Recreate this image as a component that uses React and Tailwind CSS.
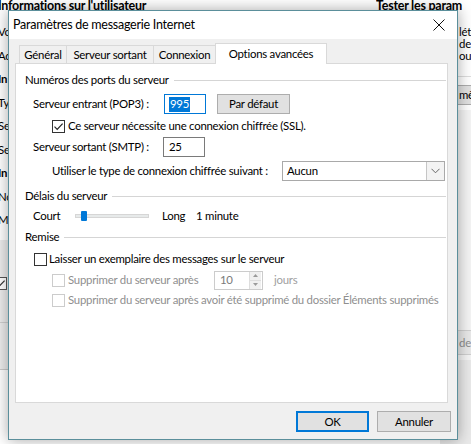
import React from "react";

function Check({ checked, disabled }) {
  return (
    <span
      className={
        disabled
          ? "w-[13px] h-[13px] border border-[#cccccc] bg-white flex items-center justify-center shrink-0"
          : "w-[13px] h-[13px] border border-[#333333] bg-white flex items-center justify-center shrink-0"
      }
    >
      {checked && (
        <svg width="11" height="11" viewBox="0 0 11 11">
          <path d="M1.5 5.6 L4.2 8.3 L9.6 2.6" fill="none" stroke="#222" strokeWidth="1.2" />
        </svg>
      )}
    </span>
  );
}

function Group({ label }) {
  return (
    <div className="flex items-center h-[16px] pl-[9px] pr-[1px] shrink-0">
      <span className="whitespace-nowrap">{label}</span>
      <div className="flex-1 h-px bg-[#d5d5d5] ml-[5px]" />
    </div>
  );
}

export default function App() {
  return (
    <div className="relative w-[471px] h-[444px] overflow-hidden bg-white text-[11.4px] tracking-[-0.25px] text-black [font-family:Lato,sans-serif] leading-none">
      {/* background window - left */}
      <div className="absolute left-0 top-[240px] w-[10px] h-[130px] bg-[#ececec] border-b border-[#c9c9c9]" />
      <div className="absolute left-0 top-[322px] w-[10px] h-px bg-[#cfcfcf]" />
      <div className="absolute left-[-6px] top-[277px] w-[13px] h-[13px] border border-[#555] flex items-center justify-center bg-white">
        <svg width="11" height="11" viewBox="0 0 11 11">
          <path d="M1.5 5.6 L4.2 8.3 L9.6 2.6" fill="none" stroke="#333" strokeWidth="1.2" />
        </svg>
      </div>
      <div className="absolute left-0 top-0 w-[240px] h-[10px] overflow-hidden">
        <div className="ml-[-2px] h-[12px] leading-[12px] font-bold text-[12.5px] whitespace-nowrap">Informations sur l'utilisateur</div>
      </div>
      <div className="absolute left-0 top-[20px] w-[8px] overflow-hidden">
        <div className="ml-[-2px] flex flex-col whitespace-nowrap">
          <div className="h-[23.5px] leading-[23.5px]">Vo</div>
          <div className="h-[23.5px] leading-[23.5px]">Ad</div>
          <div className="h-[23.5px] leading-[23.5px] font-bold">In</div>
          <div className="h-[23.5px] leading-[23.5px]">Ty</div>
          <div className="h-[23.5px] leading-[23.5px]">Se</div>
          <div className="h-[23.5px] leading-[23.5px]">Se</div>
          <div className="h-[23.5px] leading-[23.5px] font-bold">In</div>
          <div className="h-[23.5px] leading-[23.5px]">No</div>
          <div className="h-[23.5px] leading-[23.5px]">Mo</div>
        </div>
      </div>

      {/* background window - right */}
      <div className="absolute left-[376px] top-0 w-[95px] h-[10px] overflow-hidden">
        <div className="font-bold text-[12.5px] leading-[12px] whitespace-nowrap">Tester les param</div>
      </div>
      <div className="absolute left-[459px] top-[26px] w-[12px] overflow-hidden flex flex-col whitespace-nowrap">
        <div className="h-[12px] leading-[12px]">léto</div>
        <div className="h-[12px] leading-[12px]">de t</div>
        <div className="h-[12px] leading-[12px]">ous</div>
      </div>
      <div className="absolute left-[440px] top-[76px] w-[40px] h-px bg-[#dddddd]" />
      <div className="absolute left-[440px] top-[85px] w-[40px] h-[20px] bg-[#e1e1e1] border border-[#adadad]" />
      <div className="absolute left-[459px] top-[85px] w-[12px] h-[20px] overflow-hidden flex items-center whitespace-nowrap">mèt</div>
      <div className="absolute left-[440px] top-[110px] w-[40px] h-[250px] bg-[#f4f4f4]" />
      <div className="absolute left-[440px] top-[330px] w-[40px] h-[25px] bg-[#e8e8e8] border border-[#cfcfcf]" />
      <div className="absolute left-[459px] top-[330px] w-[12px] h-[25px] overflow-hidden flex items-center whitespace-nowrap text-[#8d8d8d]">der</div>
      <div className="absolute left-[440px] top-[360px] w-[40px] h-[84px] bg-[#e9e9e9]" />

      {/* dialog */}
      <div className="absolute left-[8px] top-[10px] w-[450px] h-[430px] border border-[#5b8f9b] bg-[#f0f0f0] flex flex-col shadow-[0_0_14px_rgba(0,0,0,0.35)]">
        <div className="h-[28px] bg-white flex items-center justify-between pl-[4px] pr-[12px] shrink-0">
          <span className="text-[12.5px]">Paramètres de messagerie Internet</span>
          <svg width="12" height="12" viewBox="0 0 12 12">
            <path d="M0.5 0.5L11.5 11.5M11.5 0.5L0.5 11.5" stroke="#111" strokeWidth="1" />
          </svg>
        </div>

        <div className="h-[24px] flex items-end pl-[10px] relative z-10 shrink-0">
          <div className="w-[48px] h-[18px] border border-b-0 border-[#d9d9d9] bg-[#f0f0f0] flex items-center justify-center">Général</div>
          <div className="-ml-px w-[88px] h-[18px] border border-b-0 border-[#d9d9d9] bg-[#f0f0f0] flex items-center justify-center">Serveur sortant</div>
          <div className="-ml-px w-[63px] h-[18px] border border-b-0 border-[#d9d9d9] bg-[#f0f0f0] flex items-center justify-center">Connexion</div>
          <div className="-ml-px -mb-px w-[112px] h-[21px] border border-b-0 border-[#d9d9d9] bg-white flex items-center justify-center">Options avancées</div>
        </div>

        <div className="ml-[6px] w-[433px] h-[340px] bg-white border border-[#d9d9d9] flex flex-col shrink-0">
          <div className="mt-[8px]">
            <Group label="Numéros des ports du serveur" />
          </div>

          <div className="mt-[6px] h-[20px] flex items-center pl-[17px]">
            <span className="w-[131px] whitespace-nowrap">Serveur entrant (POP3) :</span>
            <div className="w-[42px] h-[20px] border border-[#0078d7] flex items-center pl-[4px]">
              <span className="bg-[#0078d7] text-white h-[15px] px-px flex items-center">995</span>
            </div>
            <div className="ml-[11px] w-[73px] h-[20px] bg-[#e1e1e1] border border-[#adadad] flex items-center justify-center">Par défaut</div>
          </div>

          <div className="mt-[5px] h-[14px] flex items-center pl-[36px]">
            <Check checked />
            <span className="ml-[3px] whitespace-nowrap">Ce serveur nécessite une connexion chiffrée (SSL).</span>
          </div>

          <div className="mt-[4px] h-[20px] flex items-center pl-[17px]">
            <span className="w-[130px] whitespace-nowrap">Serveur sortant (SMTP) :</span>
            <div className="w-[42px] h-[20px] border border-[#7a7a7a] flex items-center pl-[5px]">25</div>
          </div>

          <div className="mt-[4px] h-[20px] flex items-center pl-[36px]">
            <span className="w-[230px] whitespace-nowrap">Utiliser le type de connexion chiffrée suivant :</span>
            <div className="w-[163px] h-[20px] border border-[#a9a9a9] bg-white flex items-center justify-between pl-[4px]">
              <span>Aucun</span>
              <div className="w-[18px] h-[18px] border-l border-[#c6c6c6] bg-[#f3f3f3] flex items-center justify-center">
                <svg width="9" height="6" viewBox="0 0 9 6">
                  <path d="M0.5 0.8 L4.5 4.8 L8.5 0.8" fill="none" stroke="#666" strokeWidth="1" />
                </svg>
              </div>
            </div>
          </div>

          <div className="mt-[7px]">
            <Group label="Délais du serveur" />
          </div>

          <div className="mt-[4px] h-[16px] flex items-center pl-[17px]">
            <span className="w-[42px]">Court</span>
            <div className="relative w-[74px] h-[16px] flex items-center">
              <div className="w-full h-[4px] bg-[#e7eaea] border border-[#d6d6d6]" />
              <div className="absolute left-[6px] top-[3px] w-[6px] h-[10px] bg-[#0078d7] rounded-[1px]" />
            </div>
            <span className="ml-[13px] w-[34px]">Long</span>
            <span className="whitespace-nowrap">1 minute</span>
          </div>

          <div className="mt-[5px]">
            <Group label="Remise" />
          </div>

          <div className="mt-[7px] h-[14px] flex items-center pl-[18px]">
            <Check />
            <span className="ml-[2px] whitespace-nowrap">Laisser un exemplaire des messages sur le serveur</span>
          </div>

          <div className="mt-[4px] h-[20px] flex items-center pl-[36px]">
            <Check disabled />
            <span className="ml-[3px] w-[146px] whitespace-nowrap text-[#8f8f8f]">Supprimer du serveur après</span>
            <div className="w-[49px] h-[19px] border border-[#cccccc] bg-white flex items-center justify-between pl-[5px] text-[#7a7a7a]">
              <span>10</span>
              <div className="w-[12px] h-[17px] mr-px flex flex-col border-l border-[#dddddd] bg-[#f0f0f0]">
                <div className="flex-1 flex items-center justify-center border-b border-[#dddddd]">
                  <svg width="5" height="3" viewBox="0 0 5 3"><path d="M0 3 L2.5 0 L5 3Z" fill="#9a9a9a" /></svg>
                </div>
                <div className="flex-1 flex items-center justify-center">
                  <svg width="5" height="3" viewBox="0 0 5 3"><path d="M0 0 L2.5 3 L5 0Z" fill="#9a9a9a" /></svg>
                </div>
              </div>
            </div>
            <span className="ml-[11px] text-[#a0a0a0]">jours</span>
          </div>

          <div className="mt-[3px] h-[14px] flex items-center pl-[36px]">
            <Check disabled />
            <span className="ml-[3px] whitespace-nowrap text-[#8f8f8f]">Supprimer du serveur après avoir été supprimé du dossier Éléments supprimés</span>
          </div>
        </div>

        <div className="flex-1 flex justify-end items-start pt-[8px] pr-[6px] gap-[8px]">
          <div className="w-[73px] h-[21px] bg-[#e1e1e1] border border-[#0078d7] shadow-[inset_0_0_0_1px_#0078d7] flex items-center justify-center">OK</div>
          <div className="w-[74px] h-[21px] bg-[#e1e1e1] border border-[#adadad] flex items-center justify-center">Annuler</div>
        </div>
      </div>
    </div>
  );
}
